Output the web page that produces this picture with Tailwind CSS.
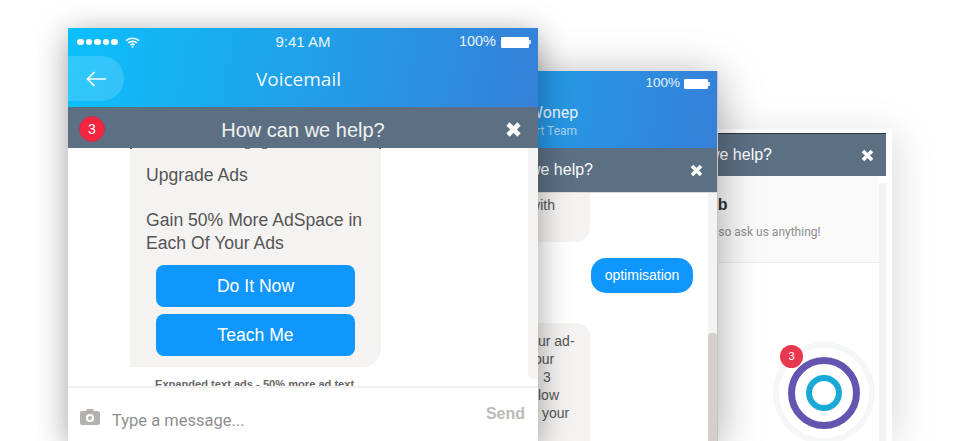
<!DOCTYPE html>
<html lang="en">
<head>
    <meta charset="UTF-8">
    <title>Voicemail</title>
    <script src="https://cdn.jsdelivr.net/npm/@tailwindcss/browser@4"></script>
</head>
<body class="bg-white font-['Liberation_Sans',sans-serif]">
<div class="relative w-[960px] h-[441px] overflow-hidden bg-white">

    <!-- back window -->
    <div class="absolute left-[420px] top-[129px] w-[472px] h-[312px] bg-white pt-[4px] pr-[6px] flex flex-col shadow-[6px_4px_36px_rgba(0,0,0,0.13)]">
        <div class="h-[43px] flex-none bg-[#5c7084] border-t border-[#30373d] text-white text-[16px] flex items-center justify-end pr-[12px]">
            <span class="mr-[89px]">How can we help?</span>
            <svg width="13" height="13" viewBox="0 0 13 13"><path d="M2 2L11 11M11 2L2 11" stroke="#fff" stroke-width="3.6"/></svg>
        </div>
        <div class="flex flex-1 min-h-0">
            <div class="flex-1 flex flex-col">
                <div class="h-[87px] flex-none bg-[#fafafa] border-b border-[#eeeeee] pt-[20px]">
                    <p class="pl-[154px] font-bold text-[16px] leading-[18px] text-[#333]">Welcome to the Hub</p>
                    <p class="pl-[230px] mt-[11px] text-[12px] leading-[14px] text-[#8e8e8e] font-['Roboto',sans-serif] whitespace-nowrap">Help is here, so ask us anything!</p>
                </div>
                <div class="flex-1 bg-white"></div>
            </div>
            <div class="w-[7px] flex-none bg-white pt-[7px]"><div class="h-full bg-[#f4f3f2]"></div></div>
        </div>
    </div>

    <!-- target widget -->
    <div class="absolute left-[773px] top-[342px] w-[102px] h-[102px] rounded-full border-[6px] border-[#f5f7f7] bg-white flex items-center justify-center">
        <div class="w-[72px] h-[72px] rounded-full border-[7px] border-[#6455b0] flex items-center justify-center">
            <div class="w-[36px] h-[36px] rounded-full border-[6px] border-[#18a9d6]"></div>
        </div>
    </div>
    <div class="absolute left-[780px] top-[345px] w-[23px] h-[23px] rounded-full bg-[#e8384f] text-white text-[11px] flex items-center justify-center">3</div>

    <!-- middle window -->
    <div class="absolute left-[248px] top-[71px] w-[470px] h-[370px] bg-white flex flex-col border-r border-[#c4c4c4] shadow-[0_6px_40px_rgba(0,0,0,0.35)]">
        <div class="h-[77px] flex-none bg-[linear-gradient(100deg,#0cc0fb,#3580d8)] text-white">
            <div class="flex justify-end items-center pt-[1px] pr-[7px] h-[24px]">
                <span class="text-[13.5px] text-white/90 mr-[4px]">100%</span>
                <div class="w-[24px] h-[10px] bg-white rounded-[1px] border border-white/60"></div>
                <div class="w-[2px] h-[4px] bg-white/80"></div>
            </div>
            <div class="pt-[8px]">
                <p class="pl-[243px] text-[16px] leading-[20px] font-['Roboto',sans-serif] text-white/90">Jess Wonep</p>
                <p class="pl-[254px] text-[12px] leading-[14px] mt-[1px] font-['Roboto',sans-serif] text-white/60">Support Team</p>
            </div>
        </div>
        <div class="h-[44px] flex-none bg-[#5c7084] text-white text-[16px] flex items-center justify-end pr-[14px]">
            <span class="mr-[97px]">How can we help?</span>
            <svg width="13" height="13" viewBox="0 0 13 13"><path d="M2 2L11 11M11 2L2 11" stroke="#fff" stroke-width="3.6"/></svg>
        </div>
        <div class="flex-1 min-h-0 border-t border-[#d8d8d8] flex">
            <div class="flex-1 flex flex-col overflow-hidden">
                <div class="ml-[80px] w-[262px] h-[49px] flex-none bg-[#f4f3f2] rounded-br-[14px] text-[14px] text-[#555] pl-[70px] pt-[2px]">
                    <p class="text-right pr-[35px]">with</p>
                </div>
                <div class="flex justify-end pr-[15px] mt-[16px]">
                    <span class="bg-[#1097fd] text-white text-[14px] h-[35px] w-[102px] rounded-[15px] flex items-center justify-center">optimisation</span>
                </div>
                <div class="ml-[80px] w-[262px] mt-[30px] flex-1 bg-[#f4f3f2] rounded-tr-[14px] text-[14px] leading-[18px] text-[#555] pl-[16px] pt-[9px] whitespace-nowrap">
                    <p class="pl-[194px]">ur ad-</p>
                    <p class="pl-[190px]">our</p>
                    <p class="pl-[199px]">3</p>
                    <p class="pl-[194px]">low</p>
                    <p class="pl-[198px]">your</p>
                </div>
            </div>
            <div class="w-[9px] flex-none bg-[#f4f3f2] flex flex-col justify-end">
                <div class="h-[108px] bg-[#d3d0cc] rounded-t-[4px]"></div>
            </div>
        </div>
    </div>

    <!-- front window -->
    <div class="absolute left-[68px] top-[28px] w-[470px] h-[413px] bg-white flex flex-col shadow-[0_6px_30px_rgba(0,0,0,0.38)]">
        <div class="h-[79px] flex-none bg-[linear-gradient(100deg,#0cc0fb,#3580d8)] text-white relative">
            <div class="h-[27px] flex items-center justify-between pl-[9px] pr-[7px] pt-[1px]">
                <div class="flex items-center gap-[2px] w-[100px]">
                    <span class="w-[6.5px] h-[6.5px] rounded-full bg-white"></span>
                    <span class="w-[6.5px] h-[6.5px] rounded-full bg-white"></span>
                    <span class="w-[6.5px] h-[6.5px] rounded-full bg-white"></span>
                    <span class="w-[6.5px] h-[6.5px] rounded-full bg-white"></span>
                    <span class="w-[6.5px] h-[6.5px] rounded-full bg-white"></span>
                    <svg class="ml-[5px]" width="15" height="11" viewBox="0 0 15 11" fill="none" stroke="#fff" stroke-width="1.6"><path d="M1 3.6C4.6 0.4 10.4 0.4 14 3.6"/><path d="M3.2 5.9C5.6 3.8 9.4 3.8 11.8 5.9"/><path d="M5.4 8C6.6 7 8.4 7 9.6 8"/><circle cx="7.5" cy="9.8" r="1" fill="#fff" stroke="none"/></svg>
                </div>
                <span class="text-[15px] text-white/90 -ml-[2px]">9:41 AM</span>
                <div class="flex items-center justify-end w-[100px]">
                    <span class="text-[14.5px] text-white/90 mr-[5px]">100%</span>
                    <div class="w-[28px] h-[11px] bg-white rounded-[1px] border border-white/60"></div>
                    <div class="w-[2px] h-[4px] bg-white/80"></div>
                </div>
            </div>
            <div class="h-[52px] flex items-center justify-center pr-[9px]">
                <span class="text-[19px] font-['Open_Sans',sans-serif] text-white/95 -mt-[3px]">Voicemail</span>
            </div>
            <div class="absolute left-0 top-[28px] w-[56px] h-[45px] bg-white/15 rounded-r-full flex items-center justify-center">
                <svg width="20" height="16" viewBox="0 0 20 16" fill="none" stroke="#fff" stroke-width="1.7"><path d="M20 8H1.5M8.5 1L1.5 8L8.5 15"/></svg>
            </div>
        </div>
        <div class="h-[41px] flex-none bg-[#5d7083] relative flex items-center justify-center">
            <div class="absolute left-[11px] top-[9px] w-[26px] h-[26px] rounded-full bg-[#f5243f] border border-[#c9304a] text-white text-[14px] flex items-center justify-center">3</div>
            <span class="text-[20px] text-[#f0f0f0] mt-[5px]">How can we help?</span>
            <svg class="absolute right-[16px] top-[14px]" width="17" height="17" viewBox="0 0 17 17"><path d="M3 3L14 14M14 3L3 14" stroke="#fff" stroke-width="4.6"/></svg>
        </div>
        <div class="flex-1 min-h-0 flex">
            <div class="flex-1 min-w-0 overflow-hidden">
                <div class="relative ml-[62px] w-[251px] h-[219px] bg-[#f4f3f2] rounded-br-[18px] px-[16px] text-[#555] text-[17.6px] leading-[23px]">
                    <!-- bottoms of the scrolled away line -->
                    <div class="absolute left-0 top-0 w-[2px] h-[1px] bg-[#555]"></div>
                    <div class="absolute left-[115px] top-0 w-[5px] h-[1px] bg-[#777]"></div>
                    <div class="absolute left-[132px] top-0 w-[5px] h-[1px] bg-[#777]"></div>
                    <div class="absolute right-0 top-0 w-[2px] h-[1px] bg-[#555]"></div>
                    <p class="pt-[16px]">Upgrade Ads</p>
                    <p class="mt-[22px]">Gain 50% More AdSpace in Each Of Your Ads</p>
                    <div class="mt-[10px] ml-[10px] w-[199px] flex flex-col gap-[7px]">
                        <button class="h-[42px] rounded-[8px] bg-[#1097fd] text-white text-[17.6px]">Do It Now</button>
                        <button class="h-[42px] rounded-[8px] bg-[#1097fd] text-white text-[17.6px]">Teach Me</button>
                    </div>
                </div>
                <p class="mt-[11px] ml-[87px] text-[11.1px] leading-[12px] font-bold text-[#666] whitespace-nowrap">Expanded text ads - 50% more ad text</p>
            </div>
            <div class="w-[10px] h-[231px] flex-none bg-[#f4f3f2] rounded-bl-[6px]"></div>
        </div>
        <div class="absolute left-0 right-0 top-[358px] h-[55px] bg-white border-t-2 border-[#f0f0f0] flex items-center pl-[12px] pr-[13px]">
            <svg width="20" height="17" viewBox="0 0 20 17" class="flex-none mt-[3px]"><path fill-rule="evenodd" fill="#b5b2ae" d="M2 3H6L7 1H13L14 3H18Q20 3 20 5V15Q20 17 18 17H2Q0 17 0 15V5Q0 3 2 3ZM10 6A4 4 0 1 0 10 14A4 4 0 1 0 10 6ZM10 8A2 2 0 1 1 10 12A2 2 0 1 1 10 8Z"/></svg>
            <span class="ml-[12px] text-[16.5px] text-[#8f8f8f] font-['Roboto',sans-serif] mt-[14px]">Type a message...</span>
            <span class="ml-auto text-[16px] font-bold text-[#bdbab5] -mt-[1px]">Send</span>
        </div>
    </div>

</div>
</body>
</html>
